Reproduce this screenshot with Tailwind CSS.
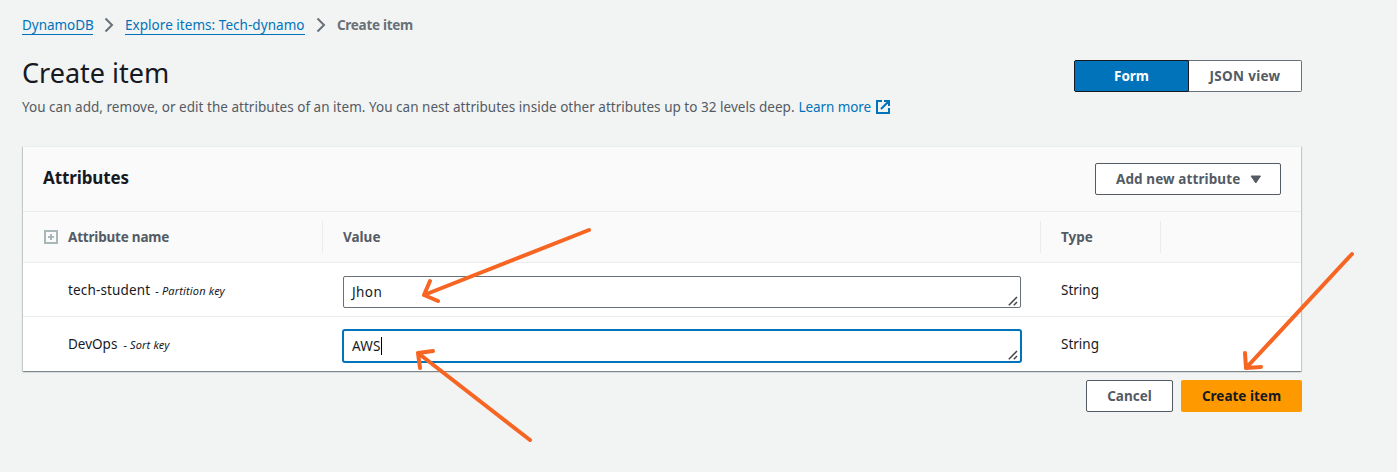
<!DOCTYPE html>
<html lang="en">
<head>
<meta charset="utf-8">
<title>Create item</title>
<script src="https://cdn.jsdelivr.net/npm/@tailwindcss/browser@4"></script>
</head>
<body class="relative h-[472px] w-[1397px] overflow-hidden bg-[#f2f3f3] font-['Noto_Sans',sans-serif] text-[13.5px] leading-[22px] text-[#16191f]">
<main class="ml-[22px] w-[1280px] pt-[14px]">
  <nav class="flex h-[22px] items-center whitespace-nowrap">
    <a class="mb-px h-[21px] w-[71px] border-b border-[#0073bb] leading-[22px] tracking-[-0.05px] text-[#0073bb]">DynamoDB</a>
    <svg class="mx-[11px] h-4 w-[10px]" viewBox="0 0 10 16" fill="none" stroke="#687078" stroke-width="2"><path d="M1.5 1.5 8 8 1.5 14.5"/></svg>
    <a class="mb-px h-[21px] w-[180px] border-b border-[#0073bb] leading-[22px] tracking-[0.04px] text-[#0073bb]">Explore items: Tech-dynamo</a>
    <svg class="mx-[11px] h-4 w-[10px]" viewBox="0 0 10 16" fill="none" stroke="#687078" stroke-width="2"><path d="M1.5 1.5 8 8 1.5 14.5"/></svg>
    <span class="font-bold tracking-[-0.3px] text-[#687078]">Create item</span>
  </nav>
  <header class="flex h-[110px] justify-between whitespace-nowrap">
    <div class="pt-[19px]">
      <h1 class="text-[27px] leading-9">Create item</h1>
      <p class="mt-[5px] flex items-center text-[#545b64]"><span class="tracking-[0.025px]">You can add, remove, or edit the attributes of an item. You can nest attributes inside other attributes up to 32 levels deep.</span><a class="ml-1 tracking-[-0.08px] text-[#0073bb]">Learn more</a>
        <svg class="ml-[5px] h-[14px] w-[14px]" viewBox="0 0 14 14" fill="none" stroke="#0073bb" stroke-width="2"><path d="M6 1H1V13H13V8M8 1H13V6M13 1 5 9"/></svg></p>
    </div>
    <div class="mt-6 flex h-8 text-center font-bold leading-[30px]">
      <div class="w-[115px] rounded-l-[2px] border border-[#16191f] bg-[#0073bb] text-white"><span>Form</span></div>
      <div class="w-[113px] rounded-r-[2px] border border-l-0 border-[#687078] bg-white text-[#545b64]"><span class="tracking-[0.3px]">JSON view</span></div>
    </div>
  </header>
  <section class="mx-px h-[225px] border-t border-[#eaeded] bg-white shadow-[0_1px_1px_0_rgba(0,28,36,0.3),1px_1px_1px_0_rgba(0,28,36,0.15),-1px_1px_1px_0_rgba(0,28,36,0.15)]">
    <div class="flex h-[64px] items-center justify-between bg-[#fafafa] px-5">
      <h2 class="pb-0.5 text-[17px] font-bold tracking-[-0.1px]">Attributes</h2>
      <button class="flex h-8 w-[186px] items-center rounded-[2px] border border-[#545b64] bg-white pl-5 font-bold text-[#545b64]"><span class="w-[124px] text-left tracking-[0.1px] whitespace-nowrap">Add new attribute</span><svg class="ml-[10px] h-[9px] w-[11px]" viewBox="0 0 11 9" fill="#545b64" stroke="#545b64" stroke-linejoin="round"><path d="M1 1h9.5L5.8 8z"/></svg></button>
    </div>
    <div class="flex h-[52px] items-center border-y border-[#eaeded] bg-[#fafafa] font-bold text-[#545b64]">
      <div class="flex h-8 w-[300px] items-center border-r border-[#eaeded] pl-[21px]"><svg class="mr-[10px] h-[14px] w-[14px]" viewBox="0 0 14 14" fill="none" stroke="#aab7b8" stroke-width="2"><path d="M1 1H13V13H1ZM4 7H10M7 4V10"/></svg><span class="tracking-[-0.2px]">Attribute name</span></div>
      <div class="flex h-8 w-[718px] items-center border-r border-[#eaeded] pl-5"><span>Value</span></div>
      <div class="flex h-8 w-[120px] items-center border-r border-[#eaeded] pl-5"><span>Type</span></div>
    </div>
    <div class="flex h-[54px] items-center border-b border-[#eaeded]">
      <div class="flex w-[320px] items-center pl-[45px]"><span class="tracking-[0.15px]">tech-student</span><span class="ml-[5px] pt-0.5 text-[11px] tracking-[0.16px] italic">- Partition key</span></div>
      <div class="mt-[6px] mb-[2px] flex h-8 w-[678px] items-center justify-between rounded-[2px] border border-[#687078] pl-2"><span class="tracking-[0.4px]">Jhon</span><svg class="mr-[2px] mb-[1px] h-[10px] w-[10px] self-end" viewBox="0 0 10 10" fill="none" stroke="#444" stroke-width="1.5"><path d="M.8 9.2 9 1M5.8 9.2 9 6"/></svg></div>
      <span class="ml-10">String</span>
    </div>
    <div class="flex h-[53px] items-center">
      <div class="flex w-[319px] items-center pl-[45px]"><span>DevOps</span><span class="ml-[6px] pt-0.5 text-[11px] tracking-[0.16px] italic">- Sort key</span></div>
      <div class="mt-[4px] flex h-[34px] w-[680px] items-center justify-between rounded-[3px] border-2 border-[#0073bb] pl-2"><div class="flex items-center"><span class="tracking-[0.2px]">AWS</span><i class="h-[18px] w-px bg-black"></i></div><svg class="mr-[2px] mb-[1px] h-[10px] w-[10px] self-end" viewBox="0 0 10 10" fill="none" stroke="#444" stroke-width="1.5"><path d="M.8 9.2 9 1M5.8 9.2 9 6"/></svg></div>
      <span class="ml-[39px]">String</span>
    </div>
  </section>
  <footer class="mt-[9px] flex justify-end gap-2 font-bold">
    <button class="h-8 w-[87px] rounded-[2px] border border-[#545b64] bg-white text-[#545b64]"><span>Cancel</span></button>
    <button class="h-8 w-[121px] rounded-[2px] bg-[#ff9900]"><span>Create item</span></button>
  </footer>
</main>
<svg class="pointer-events-none absolute inset-0" width="1397" height="472" fill="none" stroke="#f76523" stroke-width="4" stroke-linecap="round" stroke-linejoin="round"><path d="M589 230 424 295M430 281 424 295 438 301M530 440 418 353M433 351 418 353 420 368M1352 254 1246 368M1245 353 1246 368 1261 367"/></svg>
</body>
</html>
